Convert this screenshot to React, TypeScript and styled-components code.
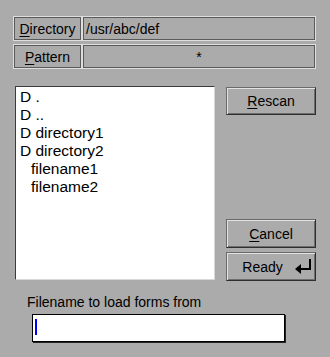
import React from 'react';
import styled, { createGlobalStyle } from 'styled-components';

const GlobalStyle = createGlobalStyle`
  html, body {
    margin: 0;
    padding: 0;
    background: #ababab;
  }
  body {
    font-family: "Liberation Sans", Arial, sans-serif;
    color: #000;
  }
`;

const Window = styled.div`
  width: 330px;
  height: 357px;
  box-sizing: border-box;
  padding: 16px 14px 0 13px;
  background: #ababab;
`;

const FieldGrid = styled.div`
  display: grid;
  grid-template-columns: 69px 1fr;
  grid-auto-rows: 25px;
  row-gap: 3px;
`;

const Frame = styled.div<{ $align?: 'left' | 'center' }>`
  box-sizing: border-box;
  display: flex;
  align-items: center;
  justify-content: ${(p) => (p.$align === 'left' ? 'flex-start' : 'center')};
  padding: 0 ${(p) => (p.$align === 'left' ? '3px' : '0')};
  border: 1px solid #dedede;
  box-shadow: inset 1px 1px 0 #5a5a5a, inset -1px -1px 0 #5a5a5a;
  font-size: 14px;
  white-space: nowrap;
`;

const Key = styled.u`
  text-decoration: underline;
  text-underline-offset: 2px;
  text-decoration-thickness: 1px;
`;

const Main = styled.div`
  display: flex;
  align-items: flex-start;
  margin: 17px 0 0 2px;
  gap: 11px;
`;

const FileList = styled.div`
  box-sizing: border-box;
  width: 201px;
  height: 194px;
  background: #fff;
  border-style: solid;
  border-width: 1px;
  border-color: #3a3a3a #d8d8d8 #d8d8d8 #3a3a3a;
  padding: 1px 0 0 4px;
  font-size: 15.5px;
  line-height: 18px;
  overflow: hidden;
`;

const Entry = styled.div<{ $file?: boolean }>`
  white-space: pre;
  padding-left: ${(p) => (p.$file ? '11px' : '0')};
`;

const ButtonColumn = styled.div`
  display: flex;
  flex-direction: column;
  justify-content: space-between;
  width: 90px;
  height: 195px;
  padding-top: 1px;
  box-sizing: border-box;
`;

const ButtonGroup = styled.div`
  display: flex;
  flex-direction: column;
  gap: 4px;
`;

const Button = styled.button<{ $h: number }>`
  box-sizing: border-box;
  display: flex;
  align-items: center;
  justify-content: center;
  gap: 12px;
  width: 90px;
  height: ${(p) => p.$h}px;
  margin: 0;
  padding: 0;
  background: #ababab;
  border: 1px solid #2e2e2e;
  border-top-color: #6a6a6a;
  border-left-color: #6a6a6a;
  box-shadow: inset 1px 1px 0 #e2e2e2, inset -1px -1px 0 #6e6e6e;
  font-family: "Liberation Sans", Arial, sans-serif;
  font-size: 14px;
  color: #000;
`;

const ReadyButton = styled(Button)`
  padding-left: 12px;
`;

const ReturnIcon = () => (
  <svg width="17" height="15" viewBox="0 0 17 15" aria-hidden="true">
    <polygon points="0,10 6,5 6,15" fill="#000" />
    <rect x="6" y="9" width="10" height="2" fill="#000" />
    <rect x="14" y="0" width="2" height="11" fill="#000" />
  </svg>
);

const Prompt = styled.div`
  margin: 13px 0 0 14px;
  font-size: 14px;
  line-height: 16px;
`;

const TextField = styled.div`
  box-sizing: border-box;
  width: 253px;
  height: 28px;
  margin: 4px 0 0 19px;
  padding: 4px 0 0 2px;
  background: #fff;
  border: 1px solid #000;
  box-shadow: 1px 1px 0 #222;
`;

const Caret = styled.span`
  display: block;
  width: 2px;
  height: 16px;
  background: #0000ff;
`;

const entries = [
  { text: 'D .', file: false },
  { text: 'D ..', file: false },
  { text: 'D directory1', file: false },
  { text: 'D directory2', file: false },
  { text: 'filename1', file: true },
  { text: 'filename2', file: true },
];

const App: React.FC = () => {
  return (
    <>
      <GlobalStyle />
      <Window>
        <FieldGrid>
          <Frame>
            <Key>D</Key>irectory
          </Frame>
          <Frame $align="left">/usr/abc/def</Frame>
          <Frame>
            <Key>P</Key>attern
          </Frame>
          <Frame>*</Frame>
        </FieldGrid>

        <Main>
          <FileList>
            {entries.map((e) => (
              <Entry key={e.text} $file={e.file}>
                {e.text}
              </Entry>
            ))}
          </FileList>
          <ButtonColumn>
            <Button $h={28}>
              <span>
                <Key>R</Key>escan
              </span>
            </Button>
            <ButtonGroup>
              <Button $h={29}>
                <span>
                  <Key>C</Key>ancel
                </span>
              </Button>
              <ReadyButton $h={29}>
                <span>Ready</span>
                <ReturnIcon />
              </ReadyButton>
            </ButtonGroup>
          </ButtonColumn>
        </Main>

        <Prompt>Filename to load forms from</Prompt>
        <TextField>
          <Caret />
        </TextField>
      </Window>
    </>
  );
};

export default App;
